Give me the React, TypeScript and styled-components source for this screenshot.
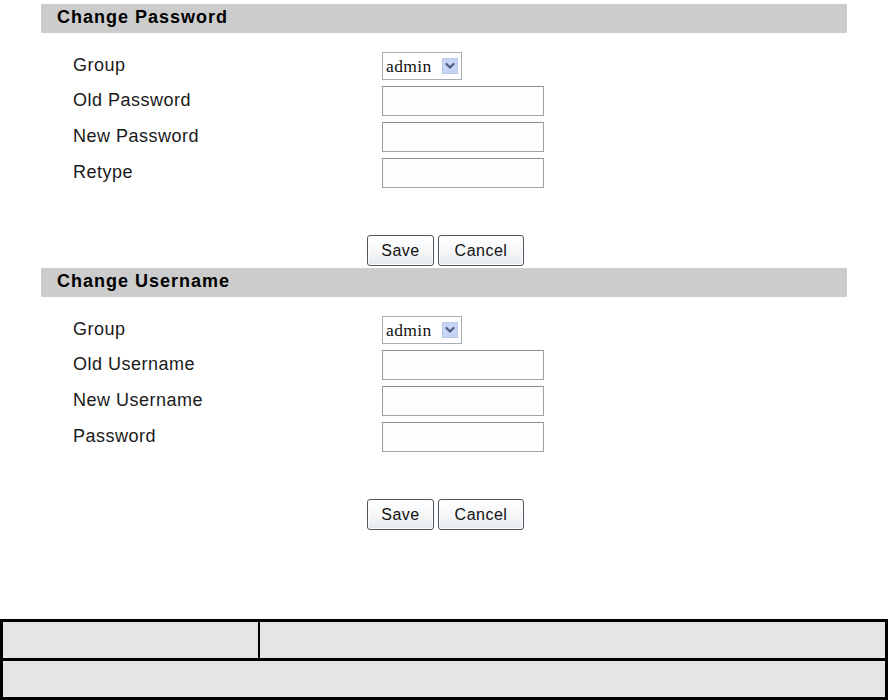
import React from "react";
import styled, { createGlobalStyle } from "styled-components";

const GlobalStyle = createGlobalStyle`
  html, body {
    margin: 0;
    padding: 0;
    background: #ffffff;
  }
  body {
    font-family: "Liberation Sans", Arial, sans-serif;
    color: #111;
  }
  * { box-sizing: border-box; }
`;

const Page = styled.div`
  width: 888px;
  padding-top: 4px;
`;

const Section = styled.section`
  margin: 0 41px 2px 41px;
`;

const SectionHeader = styled.div`
  height: 29px;
  background: #cccccc;
  padding-left: 16px;
  display: flex;
  align-items: center;
  font-weight: bold;
  font-size: 18px;
  letter-spacing: 1px;
  color: #000;
  padding-bottom: 2px;
`;

const FormGrid = styled.div`
  display: grid;
  grid-template-columns: 309px 162px;
  grid-template-rows: 28px;
  grid-auto-rows: 30px;
  row-gap: 6px;
  padding: 19px 0 0 32px;
  align-items: center;
`;

const Label = styled.label`
  font-size: 18px;
  letter-spacing: 0.5px;
  color: #1a1a1a;
  display: flex;
  align-items: center;
  height: 30px;
  padding-bottom: 1px;
`;

const SelectBox = styled.div`
  width: 80px;
  height: 28px;
  border: 1px solid #a7acb3;
  background: #fff;
  display: flex;
  align-items: center;
  justify-content: space-between;
  padding: 0 3px 0 3px;
  font-family: "Liberation Serif", "Times New Roman", serif;
  font-size: 17.5px;
  letter-spacing: 0.4px;
  color: #111;
`;

const ArrowBox = styled.span`
  width: 16px;
  height: 16px;
  background: #c6d5f3;
  border: 1px solid #b6c7ea;
  display: flex;
  align-items: center;
  justify-content: center;
`;

const TextInput = styled.input`
  width: 162px;
  height: 30px;
  border: 1px solid #a3a3a3;
  border-top-color: #8f8f8f;
  border-left-color: #9a9a9a;
  background: #fdfeff;
  margin: 0;
  padding: 0 4px;
  outline: none;
`;

const ButtonRow = styled.div`
  margin-top: 47px;
  display: flex;
  justify-content: center;
  gap: 4px;
  padding-left: 3px;
`;

const Button = styled.button<{ $w: number }>`
  width: ${(p) => p.$w}px;
  height: 31px;
  padding: 0;
  border: 1px solid #4d5661;
  border-radius: 3px;
  background: linear-gradient(#ffffff, #f3f5f7 60%, #e4e8ec);
  font-family: "Liberation Sans", Arial, sans-serif;
  font-size: 16px;
  letter-spacing: 0.5px;
  color: #111;
  box-shadow: inset 0 0 0 1px #fbfcfd;
`;

const InfoTable = styled.div`
  margin-top: 89px;
  width: 888px;
  border: 3px solid #000;
  background: #e5e5e5;
`;

const TopRow = styled.div`
  display: grid;
  grid-template-columns: 257px 1fr;
  height: 39px;
  border-bottom: 3px solid #000;
`;

const Cell = styled.div<{ $divider?: boolean }>`
  background: #e5e5e5;
  border-right: ${(p) => (p.$divider ? "2px solid #000" : "none")};
`;

const BottomRow = styled.div`
  height: 36px;
`;

const Chevron = () => (
  <svg width="10" height="8" viewBox="0 0 10 8">
    <path d="M1.5 2 L5 5.5 L8.5 2" fill="none" stroke="#4a5f86" strokeWidth="2.2" strokeLinecap="round" strokeLinejoin="round" />
  </svg>
);

type Row = { label: string };

const FormSection = ({ title, rows }: { title: string; rows: Row[] }) => (
  <Section>
    <SectionHeader>{title}</SectionHeader>
    <FormGrid>
      <Label>Group</Label>
      <SelectBox>
        <span>admin</span>
        <ArrowBox>
          <Chevron />
        </ArrowBox>
      </SelectBox>
      {rows.map((r) => (
        <React.Fragment key={r.label}>
          <Label>{r.label}</Label>
          <TextInput type={r.label.includes("Password") || r.label === "Retype" ? "password" : "text"} />
        </React.Fragment>
      ))}
    </FormGrid>
    <ButtonRow>
      <Button $w={67}>Save</Button>
      <Button $w={86}>Cancel</Button>
    </ButtonRow>
  </Section>
);

export default function App() {
  return (
    <Page>
      <GlobalStyle />
      <FormSection
        title="Change Password"
        rows={[{ label: "Old Password" }, { label: "New Password" }, { label: "Retype" }]}
      />
      <FormSection
        title="Change Username"
        rows={[{ label: "Old Username" }, { label: "New Username" }, { label: "Password" }]}
      />
      <InfoTable>
        <TopRow>
          <Cell $divider />
          <Cell />
        </TopRow>
        <BottomRow />
      </InfoTable>
    </Page>
  );
}
